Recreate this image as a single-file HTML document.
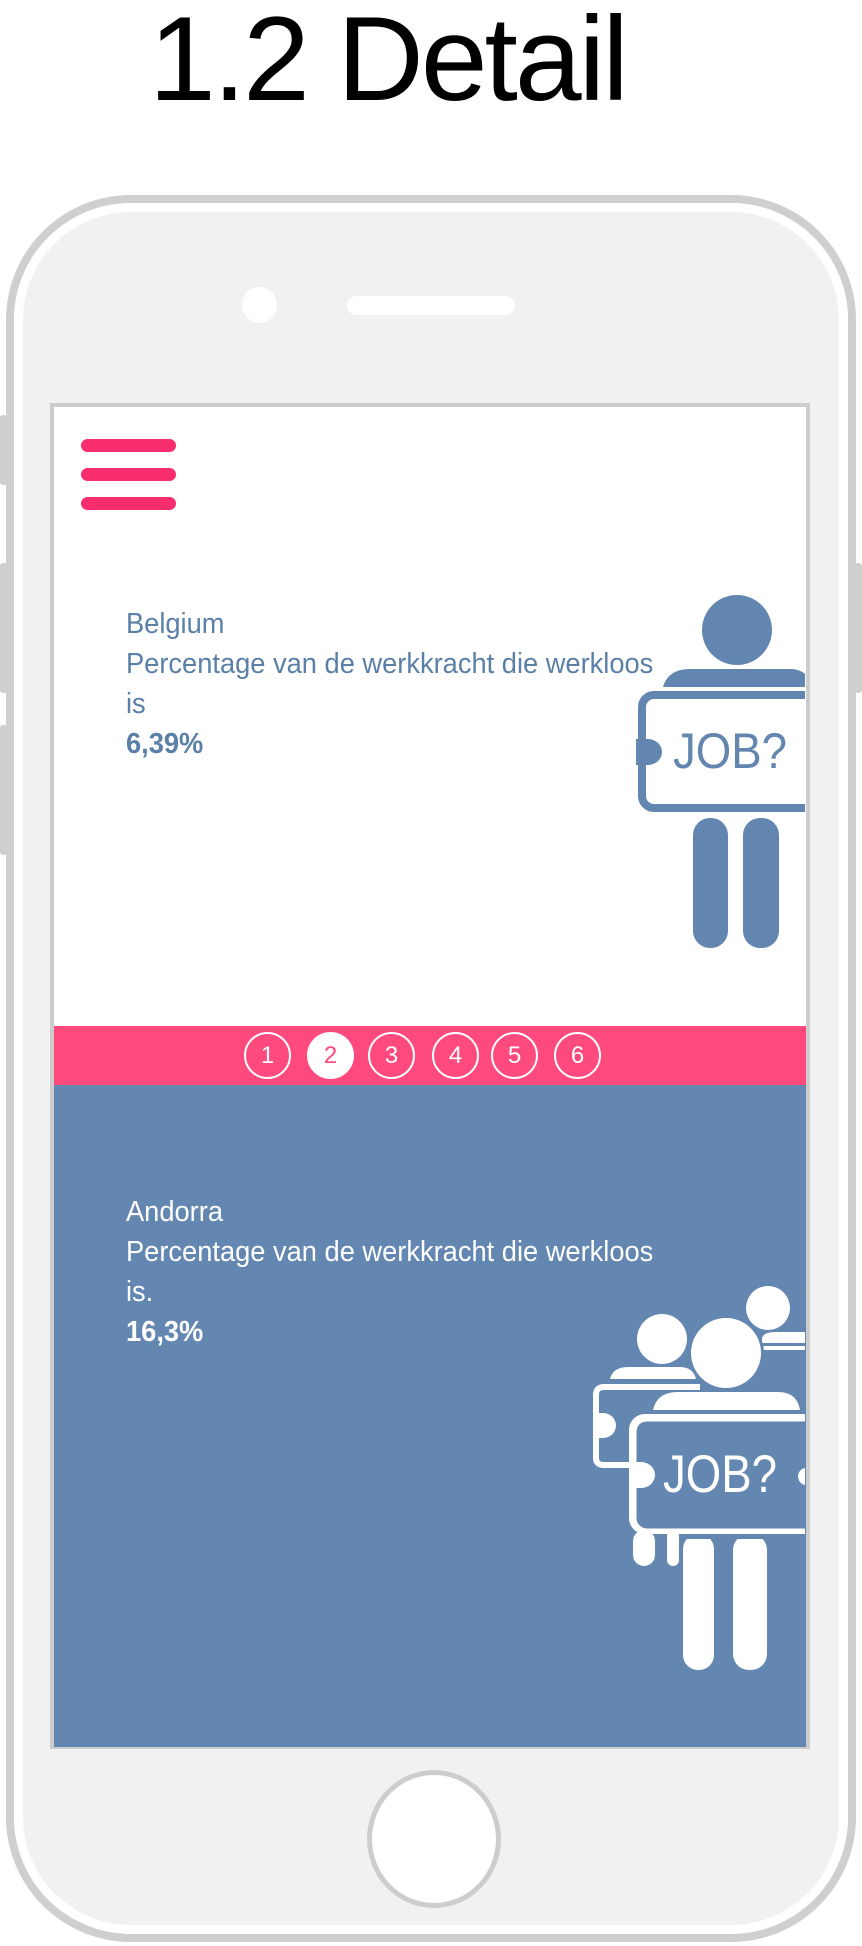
<!DOCTYPE html>
<html><head><meta charset="utf-8"><style>
*{margin:0;padding:0;box-sizing:border-box}
body{width:862px;height:1946px;background:#fff;position:relative;overflow:hidden;font-family:"Liberation Sans",sans-serif}
.abs{position:absolute}
.title{left:149px;top:-11px;font-size:120px;letter-spacing:-3px;color:#000;white-space:nowrap;line-height:140px}
.phone{left:6px;top:195px;width:850px;height:1747px;border:8px solid #cfcfcf;border-radius:125px;background:#fff}
.phone2{left:14px;top:203px;width:834px;height:1731px;border:9px solid #fff;border-radius:117px;background:#f1f1f1}
.screen{left:50px;top:403px;width:760px;height:1346px;border:4px solid #cdcdcd;background:#fff;overflow:hidden}
.txt{left:126px;font-size:29px;line-height:40px;transform:scaleX(0.94);transform-origin:left top;white-space:nowrap}
.circ{position:absolute;top:1032px;width:47px;height:47px;border:2px solid #fff;border-radius:50%;color:#fff;font-size:24px;line-height:43px;text-align:center}
</style></head><body>
<div class="abs title">1.2 Detail</div>
<div class="abs" style="left:0;top:415px;width:7px;height:70px;background:#cfcfcf;border-radius:3px"></div>
<div class="abs" style="left:0;top:563px;width:7px;height:130px;background:#cfcfcf;border-radius:3px"></div>
<div class="abs" style="left:0;top:725px;width:7px;height:130px;background:#cfcfcf;border-radius:3px"></div>
<div class="abs" style="left:855px;top:563px;width:7px;height:130px;background:#cfcfcf;border-radius:3px"></div>
<div class="abs phone"></div>
<div class="abs phone2"></div>
<div class="abs" style="left:242px;top:287px;width:35px;height:36px;border-radius:50%;background:#fff"></div>
<div class="abs" style="left:347px;top:296px;width:168px;height:19px;border-radius:10px;background:#fff"></div>
<div class="abs" style="left:367px;top:1770px;width:134px;height:138px;border-radius:50%;border:5px solid #cdcdcd;background:#fff"></div>
<div class="abs screen"></div>
<div class="abs" style="left:81px;top:439px;width:95px;height:13px;border-radius:7px;background:#f72d6d"></div>
<div class="abs" style="left:81px;top:468px;width:95px;height:13px;border-radius:7px;background:#f72d6d"></div>
<div class="abs" style="left:81px;top:497px;width:95px;height:13px;border-radius:7px;background:#f72d6d"></div>
<div class="abs txt" style="top:604px;color:#5a80a8">Belgium<br>Percentage van de werkkracht die werkloos<br>is<br><b>6,39%</b></div>
<div class="abs" style="left:54px;top:1085px;width:752px;height:662px;background:#6387b1"></div>
<div class="abs" style="left:54px;top:1026px;width:752px;height:59px;background:#ff4a7e"></div>
<div class="circ" style="left:244px">1</div>
<div class="circ" style="left:307px;background:#fff;color:#ff4a7e">2</div>
<div class="circ" style="left:368px">3</div>
<div class="circ" style="left:432px">4</div>
<div class="circ" style="left:491px">5</div>
<div class="circ" style="left:554px">6</div>
<div class="abs txt" style="top:1192px;color:#fff">Andorra<br>Percentage van de werkkracht die werkloos<br>is.<br><b>16,3%</b></div>
<svg class="abs" style="left:0;top:0" width="862" height="1946">
<defs><clipPath id="c"><rect x="54" y="407" width="751" height="1340"/></clipPath></defs>
<g clip-path="url(#c)">
<g fill="#6386b0">
<circle cx="737" cy="630" r="35"/>
<path d="M663 687 Q668 669 690 669 L790 669 Q808 669 812 687 Z"/>
<rect x="693" y="818" width="35" height="130" rx="17"/>
<rect x="743" y="818" width="36" height="130" rx="17"/>
</g>
<rect x="642" y="695" width="190" height="113" rx="12" fill="none" stroke="#6386b0" stroke-width="8"/>
<path d="M636 739 h12 a14 13 0 0 1 0 26 h-12 z" fill="#6386b0"/>
<text x="673" y="768" font-size="50" fill="#6386b0" font-family="Liberation Sans" textLength="114" lengthAdjust="spacingAndGlyphs">JOB?</text>
<g fill="#fff">
<circle cx="768" cy="1308" r="22"/>
<path d="M762 1343 L762 1338 Q764 1332 775 1332 L812 1332 L812 1343 Z"/>
<rect x="762" y="1346" width="50" height="4"/>
<circle cx="662" cy="1339" r="25"/>
<path d="M610 1379 Q613 1367 628 1367 L680 1367 Q693 1367 696 1379 Z"/>
</g>
<path d="M700 1387 H604 Q596 1387 596 1395 V1458 Q596 1465 604 1465 H630" fill="none" stroke="#fff" stroke-width="6"/>
<path d="M598 1413 h5 a13 12.5 0 0 1 0 25 h-5 z" fill="#fff"/>
<rect x="633" y="1530" width="22" height="36" rx="11" fill="#fff"/>
<rect x="667" y="1530" width="12" height="36" rx="6" fill="#fff"/>
<circle cx="726" cy="1353" r="38" fill="#6387b1"/>
<circle cx="726" cy="1353" r="35" fill="#fff"/>
<path d="M653 1410 Q657 1392 678 1392 L778 1392 Q797 1392 800 1410 Z" fill="#fff"/>
<rect x="633" y="1418" width="195" height="112" rx="12" fill="#6387b1" stroke="#fff" stroke-width="8"/>
<rect x="638" y="1423" width="180" height="104" rx="9" fill="none" stroke="#6387b1" stroke-width="3"/>
<path d="M629 1462 h12 a14 13 0 0 1 0 26 h-12 z" fill="#fff"/>
<path d="M806 1468 a8 8.5 0 0 0 0 17 z" fill="#fff"/>
<rect x="683" y="1534" width="31" height="136" rx="15" fill="#fff"/>
<rect x="733" y="1534" width="34" height="136" rx="16" fill="#fff"/>
<rect x="683" y="1534" width="84" height="5" fill="#6387b1"/>
<text x="663" y="1492" font-size="53" fill="#fff" font-family="Liberation Sans" textLength="114" lengthAdjust="spacingAndGlyphs">JOB?</text>
</g>
</svg>
</body></html>
